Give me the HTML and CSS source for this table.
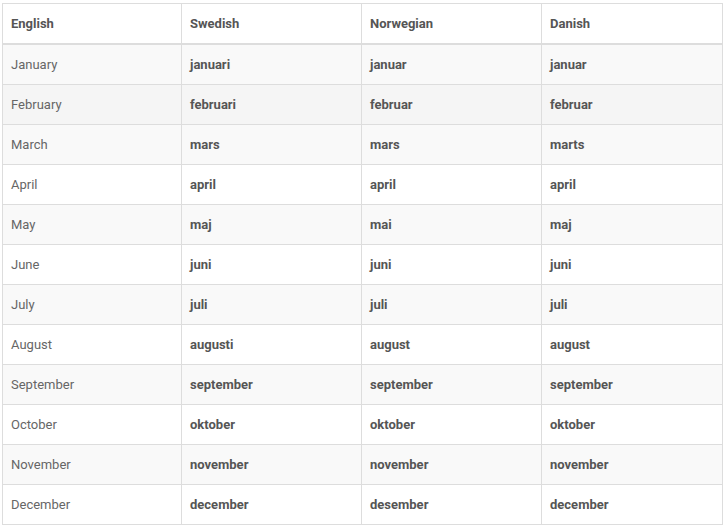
FILE: index.html
```html
<!DOCTYPE html>
<html>
<head>
<meta charset="utf-8">
<link rel="stylesheet" href="styles.css">
</head>
<body>
<div class="wrap">
<table class="months">
<colgroup>
<col class="c1"><col class="c2"><col class="c3"><col class="c4">
</colgroup>
<thead>
<tr><th>English</th><th>Swedish</th><th>Norwegian</th><th>Danish</th></tr>
</thead>
<tbody>
<tr><td>January</td><td>januari</td><td>januar</td><td>januar</td></tr>
<tr class="hover"><td>February</td><td>februari</td><td>februar</td><td>februar</td></tr>
<tr><td>March</td><td>mars</td><td>mars</td><td>marts</td></tr>
<tr><td>April</td><td>april</td><td>april</td><td>april</td></tr>
<tr><td>May</td><td>maj</td><td>mai</td><td>maj</td></tr>
<tr><td>June</td><td>juni</td><td>juni</td><td>juni</td></tr>
<tr><td>July</td><td>juli</td><td>juli</td><td>juli</td></tr>
<tr><td>August</td><td>augusti</td><td>august</td><td>august</td></tr>
<tr><td>September</td><td>september</td><td>september</td><td>september</td></tr>
<tr><td>October</td><td>oktober</td><td>oktober</td><td>oktober</td></tr>
<tr><td>November</td><td>november</td><td>november</td><td>november</td></tr>
<tr><td>December</td><td>december</td><td>desember</td><td>december</td></tr>
</tbody>
</table>
</div>
</body>
</html>
```
FILE: styles.css
```css
html, body {
  margin: 0;
  padding: 0;
  background: #fff;
}
body {
  font-family: Roboto, "Liberation Sans", sans-serif;
  font-size: 13px;
  color: #666;
}
.wrap {
  padding: 3px 2px 0 2px;
}
.months {
  width: 720px;
  border-collapse: collapse;
  table-layout: fixed;
  border: 1px solid #ddd;
}
.c1 { width: 179px; }
.c2 { width: 180px; }
.c3 { width: 180px; }
.c4 { width: 181px; }
.months th,
.months td {
  border: 1px solid #ddd;
  padding: 10px 8px;
  line-height: 19px;
  height: 19px;
  text-align: left;
  vertical-align: middle;
}
.months th {
  font-weight: 700;
  color: #555;
  border-bottom: 2px solid #ddd;
}
.months td {
  font-weight: 700;
  color: #555;
}
.months td:first-child {
  font-weight: 400;
  color: #666;
}
.months tbody tr:nth-child(odd) {
  background: #f9f9f9;
}
.months tbody tr.hover {
  background: #f5f5f5;
}
```
